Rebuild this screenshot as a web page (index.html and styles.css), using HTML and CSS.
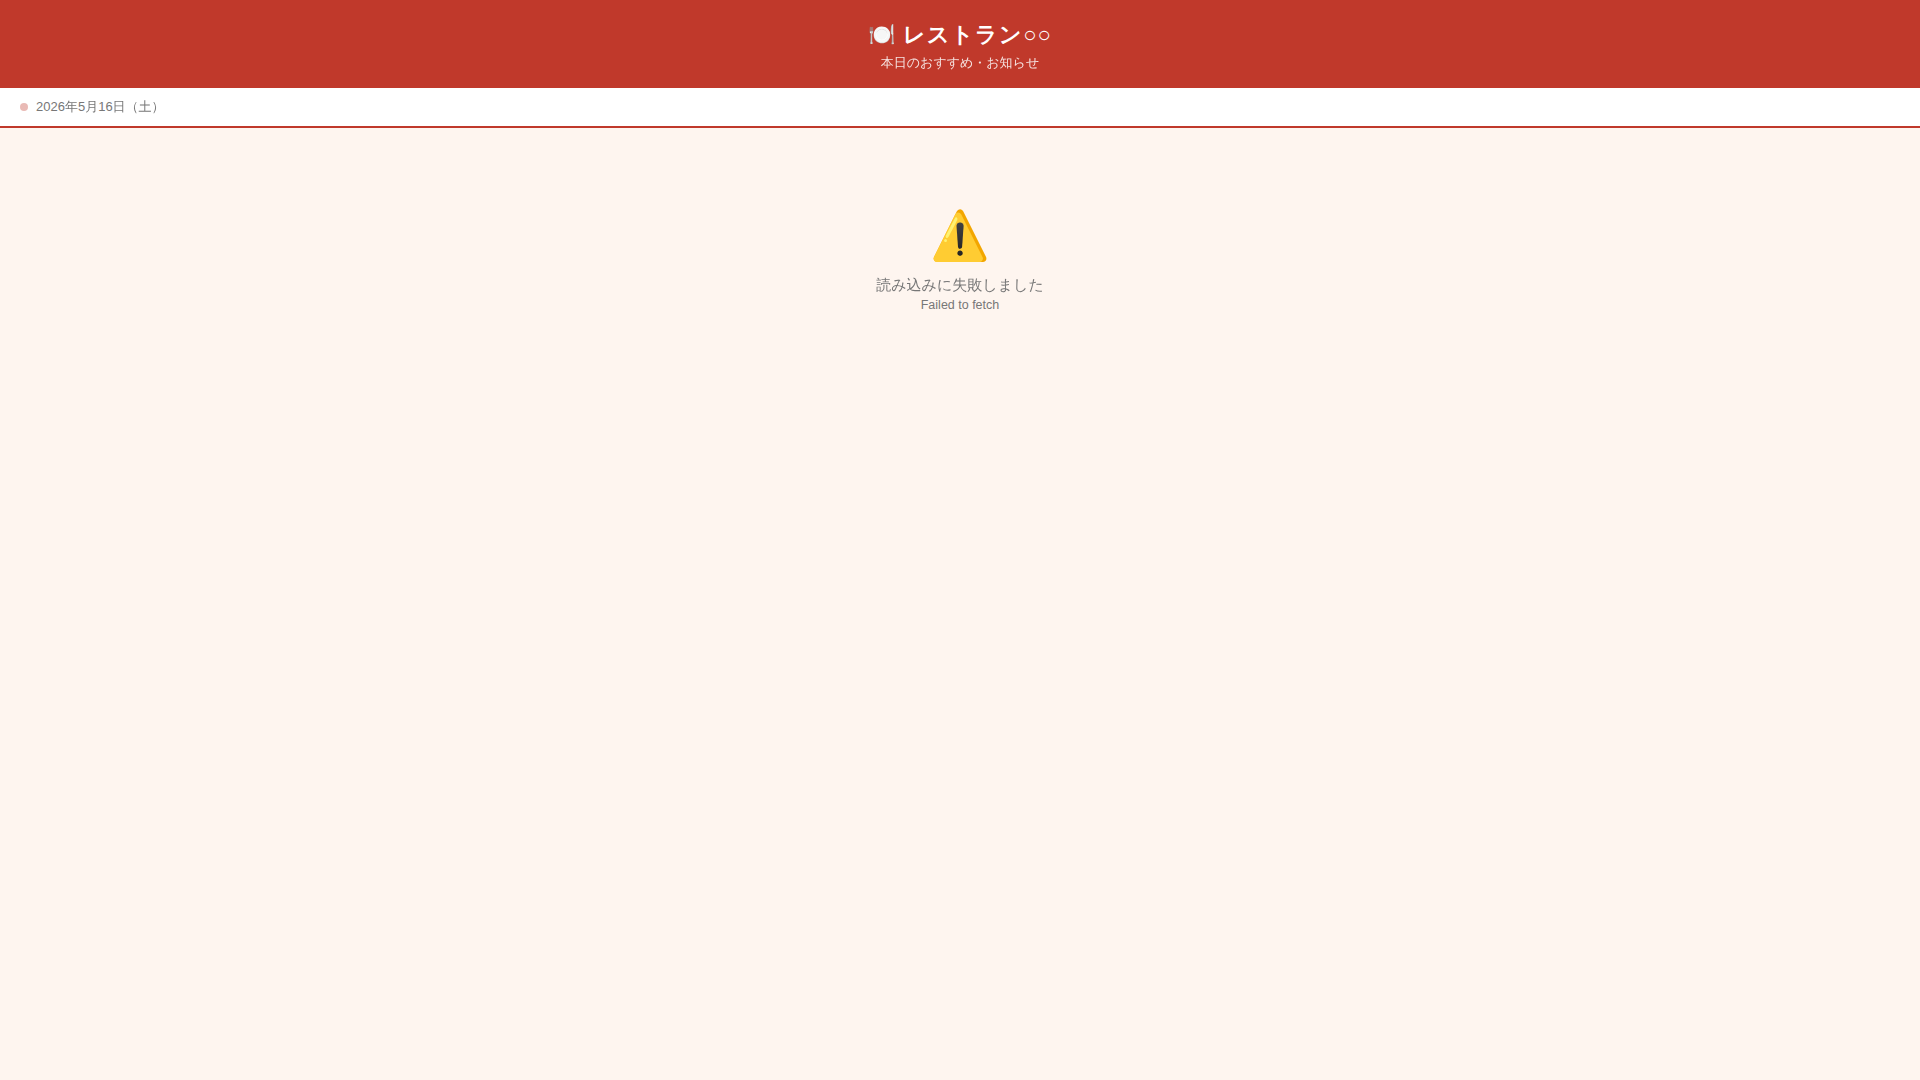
FILE: index.html
```html
<!DOCTYPE html>
<html lang="ja">
<head>
    <meta charset="UTF-8">
    <meta name="viewport" content="width=device-width, initial-scale=1.0">
    <title>レストラン○○</title>
    <link rel="stylesheet" href="styles.css">
</head>
<body>

    <header class="header">
        <h1>🍽️ レストラン○○</h1>
        <p>本日のおすすめ・お知らせ</p>
    </header>

    <div class="date-bar">
        <span class="dot"></span>
        <span>2026年5月16日（土）</span>
    </div>

    <main class="content">
        <div class="message">
            <div class="message-icon">⚠️</div>
            <p>読み込みに失敗しました</p>
            <small>Failed to fetch</small>
        </div>
    </main>

</body>
</html>
```
FILE: styles.css
```css
* {
    box-sizing: border-box;
    margin: 0;
    padding: 0;
}
body {
    font-family: "Liberation Sans", "WenQuanYi Zen Hei", "Noto Sans CJK JP", sans-serif;
    background: #fef5ef;
    color: #777;
    min-height: 100vh;
}
.header {
    background: #c0392b;
    color: #fff;
    text-align: center;
    padding: 20px 20px 16px;
}
.header h1 {
    font-family: "Liberation Sans", sans-serif;
    font-size: 22px;
    letter-spacing: 1px;
}
.header p {
    font-size: 13px;
    margin-top: 4px;
    opacity: 0.85;
}
.date-bar {
    display: flex;
    align-items: center;
    gap: 8px;
    background: #fff;
    border-bottom: 2px solid #c0392b;
    padding: 10px 20px;
    font-size: 13px;
}
.dot {
    width: 8px;
    height: 8px;
    border-radius: 50%;
    background: #c0392b;
    opacity: 0.35;
}
.content {
    padding: 20px;
}
.message {
    text-align: center;
    padding: 60px 20px;
    font-size: 15px;
}
.message-icon {
    font-size: 48px;
    line-height: 56px;
    margin-bottom: 12px;
}
```
